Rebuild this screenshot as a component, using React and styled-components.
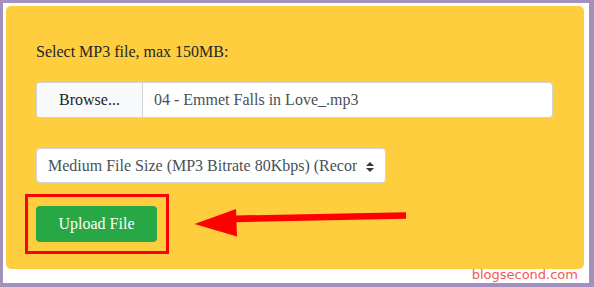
import React from 'react';
import styled, { createGlobalStyle } from 'styled-components';

const GlobalStyle = createGlobalStyle`
  html, body {
    margin: 0;
    padding: 0;
    background: #fff;
  }
  * {
    box-sizing: border-box;
  }
`;

const Frame = styled.div`
  position: relative;
  width: 594px;
  height: 287px;
  border-style: solid;
  border-color: #a390bd;
  border-width: 3px 5px 4px 3px;
  background: #fff;
  padding: 3px;
`;

const Panel = styled.div`
  width: 578px;
  height: 263px;
  background: #ffce3e;
  border-radius: 5px;
  padding: 34px 30px 0 30px;
  font-family: 'Liberation Serif', 'DejaVu Serif', serif;
`;

const Label = styled.div`
  font-size: 16px;
  line-height: 24px;
  color: #212529;
  margin-bottom: 18px;
`;

const FileGroup = styled.div`
  display: flex;
  width: 517px;
  height: 36px;
  border: 1px solid #ced4da;
  border-radius: 4px;
  background: #fff;
  overflow: hidden;
  margin-bottom: 30px;
`;

const BrowseButton = styled.div`
  width: 106px;
  display: flex;
  align-items: center;
  justify-content: center;
  background: #f8f9fa;
  border-right: 1px solid #ced4da;
  font-size: 16px;
  color: #212529;
`;

const FileName = styled.div`
  flex: 1;
  display: flex;
  align-items: center;
  padding-left: 11px;
  font-size: 16px;
  color: #495057;
`;

const SelectBox = styled.div`
  position: relative;
  width: 350px;
  height: 35px;
  border: 1px solid #ced4da;
  border-radius: 4px;
  background: #fff;
  display: flex;
  align-items: center;
  padding: 0 28px 0 11px;
  margin-bottom: 11px;
`;

const SelectText = styled.div`
  font-size: 16px;
  color: #495057;
  white-space: nowrap;
  overflow: hidden;
`;

const SelectArrows = styled.svg`
  position: absolute;
  right: 11px;
  top: 13px;
`;

const Highlight = styled.div`
  display: inline-block;
  margin-left: -11px;
  border: 3px solid #ff0000;
  padding: 9px 9px 9px 8px;
`;

const UploadButton = styled.button`
  width: 121px;
  height: 36px;
  border: none;
  border-radius: 4px;
  background: #28a745;
  color: #fff;
  font-family: 'Liberation Serif', 'DejaVu Serif', serif;
  font-size: 16px;
  display: block;
`;

const Pointer = styled.svg`
  position: absolute;
  left: 185px;
  top: 200px;
`;

const Watermark = styled.div`
  position: absolute;
  right: 11px;
  bottom: 1px;
  font-family: 'DejaVu Sans', sans-serif;
  font-size: 13px;
  color: #f25757;
`;

export default function App() {
  return (
    <>
      <GlobalStyle />
      <Frame>
        <Panel>
          <Label>Select MP3 file, max 150MB:</Label>
          <FileGroup>
            <BrowseButton>Browse...</BrowseButton>
            <FileName>04 - Emmet Falls in Love_.mp3</FileName>
          </FileGroup>
          <SelectBox>
            <SelectText>Medium File Size (MP3 Bitrate 80Kbps) (Recommended)</SelectText>
            <SelectArrows width="8" height="10" viewBox="0 0 8 10">
              <path d="M4 0 L8 4 L0 4 Z M0 6 L8 6 L4 10 Z" fill="#343a40" />
            </SelectArrows>
          </SelectBox>
          <Highlight>
            <UploadButton>Upload File</UploadButton>
          </Highlight>
        </Panel>
        <Pointer width="225" height="40" viewBox="185 200 225 40">
          <path d="M233 212.5 L403 209.3 L403 215.8 L233 219.2 Z" fill="#ff0000" />
          <path d="M191.5 221 L233 206 L234 233.5 Z" fill="#ff0000" />
        </Pointer>
        <Watermark>blogsecond.com</Watermark>
      </Frame>
    </>
  );
}
